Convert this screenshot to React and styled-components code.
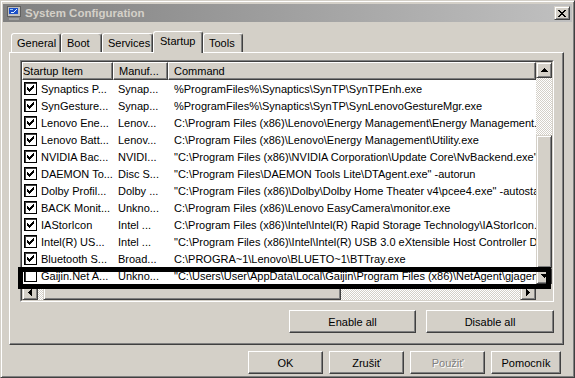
import React from 'react';
import styled, { createGlobalStyle, css } from 'styled-components';

const GlobalStyle = createGlobalStyle`
  html, body {
    margin: 0;
    padding: 0;
    background: #d4d0c8;
  }
  body {
    font-family: "Liberation Sans", Arial, sans-serif;
    font-size: 11px;
    color: #000;
  }
`;

const raised = css`
  border: 1px solid;
  border-color: #fff #404040 #404040 #fff;
  box-shadow: inset -1px -1px 0 #808080;
`;

const scrollRaised = css`
  border: 1px solid;
  border-color: #d4d0c8 #404040 #404040 #d4d0c8;
  box-shadow: inset 1px 1px 0 #fff, inset -1px -1px 0 #808080;
`;

const Window = styled.div`
  width: 575px;
  height: 378px;
  box-sizing: border-box;
  background: #d4d0c8;
  border: 1px solid;
  border-color: #d4d0c8 #404040 #404040 #d4d0c8;
  box-shadow: inset 1px 1px 0 #fff, inset -1px -1px 0 #808080;
  padding: 3px 2px 2px 2px;
  display: flex;
  flex-direction: column;
`;

const TitleBar = styled.div`
  height: 18px;
  flex: none;
  display: flex;
  align-items: center;
  padding: 0 2px 0 3px;
  background: linear-gradient(to right, #808080, #c0c0c0);
`;

const TitleText = styled.span`
  flex: 1;
  margin-left: 3px;
  font-weight: bold;
  font-size: 11.5px;
  color: #d4d0c8;
  white-space: nowrap;
`;

const CloseButton = styled.div`
  width: 16px;
  height: 14px;
  box-sizing: border-box;
  background: #d4d0c8;
  ${scrollRaised};
  display: flex;
  align-items: center;
  justify-content: center;
`;

const TabStrip = styled.div`
  display: flex;
  align-items: flex-end;
  margin: 9px 0 0 8px;
  padding-left: 0;
  height: 21px;
  flex: none;
`;

const Tab = styled.div`
  position: relative;
  z-index: ${p => (p.$active ? 2 : 0)};
  box-sizing: border-box;
  width: ${p => p.$w}px;
  height: ${p => (p.$active ? 22 : 19)}px;
  margin-bottom: ${p => (p.$active ? -1 : 0)}px;
  padding: ${p => (p.$active ? '0 0 3px 6px' : '0 0 0 5px')};
  display: flex;
  align-items: center;
  background: #d4d0c8;
  border: 1px solid;
  border-bottom: none;
  border-color: #fff #404040 transparent #fff;
  border-radius: 3px 3px 0 0;
  box-shadow: inset -1px 0 0 #808080;
`;

const Panel = styled.div`
  position: relative;
  z-index: 1;
  box-sizing: border-box;
  height: 293px;
  margin: 0 8px 0 6px;
  padding: 7px 9px 11px 10px;
  flex: none;
  ${raised};
  display: flex;
  flex-direction: column;
`;

const ListFrame = styled.div`
  position: relative;
  box-sizing: border-box;
  height: 242px;
  border: 1px solid;
  border-color: #808080 #fff #fff #808080;
`;

const ListBody = styled.div`
  height: 100%;
  box-sizing: border-box;
  border: 1px solid;
  border-color: #404040 #d4d0c8 #d4d0c8 #404040;
  display: grid;
  grid-template-columns: 1fr 16px;
  grid-template-rows: 1fr 16px;
  background: #fff;
`;

const Viewport = styled.div`
  overflow: hidden;
  background: #fff;
  min-width: 0;
`;

const HeaderRow = styled.div`
  display: flex;
  height: 18px;
`;

const HeaderCell = styled.div`
  box-sizing: border-box;
  flex: ${p => (p.$w ? `0 0 ${p.$w}px` : '1 0 auto')};
  height: 18px;
  padding-left: ${p => p.$pad}px;
  display: flex;
  align-items: center;
  background: #d4d0c8;
  ${raised};
  white-space: nowrap;
  overflow: hidden;
`;

const Row = styled.div`
  display: flex;
  align-items: center;
  height: 17px;
  white-space: nowrap;
`;

const Cell = styled.div`
  flex: ${p => (p.$w ? `0 0 ${p.$w}px` : '1 0 auto')};
  box-sizing: border-box;
  padding-left: ${p => p.$pad}px;
  display: flex;
  align-items: center;
  overflow: hidden;
`;

const CheckBox = styled.div`
  width: 13px;
  height: 13px;
  box-sizing: border-box;
  margin: 0 4px 0 2px;
  flex: none;
  background: #fff;
  border: 1px solid;
  border-color: #000 #000 #000 #000;
  box-shadow: inset 1px 1px 0 #404040;
  display: flex;
  align-items: center;
  justify-content: center;
`;

const VScroll = styled.div`
  display: flex;
  flex-direction: column;
`;

const HScroll = styled.div`
  display: flex;
`;

const Corner = styled.div`
  background: #d4d0c8;
`;

const ScrollBtn = styled.div`
  flex: none;
  width: 16px;
  height: 16px;
  box-sizing: border-box;
  background: #d4d0c8;
  ${scrollRaised};
  display: flex;
  align-items: center;
  justify-content: center;
`;

const Track = styled.div`
  flex: ${p => (p.$size ? `0 0 ${p.$size}px` : '1')};
  background: repeating-conic-gradient(#fff 0 25%, #d4d0c8 0 50%) 0 0 / 2px 2px;
`;

const Thumb = styled.div`
  flex: 0 0 ${p => p.$size}px;
  box-sizing: border-box;
  background: #d4d0c8;
  ${scrollRaised};
`;

const Highlight = styled.div`
  position: absolute;
  left: -3px;
  top: 206px;
  width: 533px;
  height: 22px;
  box-sizing: border-box;
  border: 5px solid #000;
  pointer-events: none;
`;

const ButtonRow = styled.div`
  display: flex;
  justify-content: flex-end;
  gap: ${p => p.$gap}px;
  margin: ${p => p.$margin};
  flex: none;
`;

const Button = styled.div`
  box-sizing: border-box;
  width: ${p => p.$w}px;
  height: 23px;
  background: #d4d0c8;
  ${raised};
  display: flex;
  align-items: center;
  justify-content: center;
  color: ${p => (p.$disabled ? '#808080' : '#000')};
  text-shadow: ${p => (p.$disabled ? '1px 1px 0 #fff' : 'none')};
`;

const CHECK = [
  '......#',
  '.....##',
  '#...###',
  '##.###.',
  '#####..',
  '.###...',
  '..#....',
];

const CheckMark = () => (
  <svg width="7" height="7" shapeRendering="crispEdges">
    {CHECK.flatMap((line, y) =>
      line.split('').map((c, x) => (c === '#' ? <rect key={`${x}-${y}`} x={x} y={y} width="1" height="1" fill="#000" /> : null))
    )}
  </svg>
);

const Arrow = ({ dir }) => {
  const rects = [];
  for (let i = 0; i < 4; i++) {
    const len = 1 + i * 2;
    const off = 3 - i;
    if (dir === 'up') rects.push(<rect key={i} x={off} y={i} width={len} height="1" />);
    if (dir === 'down') rects.push(<rect key={i} x={off} y={3 - i} width={len} height="1" />);
    if (dir === 'left') rects.push(<rect key={i} x={i} y={off} width="1" height={len} />);
    if (dir === 'right') rects.push(<rect key={i} x={3 - i} y={off} width="1" height={len} />);
  }
  const horiz = dir === 'left' || dir === 'right';
  return (
    <svg width={horiz ? 4 : 7} height={horiz ? 7 : 4} shapeRendering="crispEdges" fill="#000">
      {rects}
    </svg>
  );
};

const CloseGlyph = () => {
  const rects = [];
  for (let i = 0; i < 7; i++) {
    rects.push(<rect key={`a${i}`} x={i} y={i} width="2" height="1" />);
    rects.push(<rect key={`b${i}`} x={6 - i} y={i} width="2" height="1" />);
  }
  return (
    <svg width="8" height="7" shapeRendering="crispEdges" fill="#000">
      {rects}
    </svg>
  );
};

const MsconfigIcon = () => (
  <svg width="16" height="16" viewBox="0 0 16 16" shapeRendering="crispEdges">
    <rect x="1" y="1" width="13" height="10" fill="#c0c0c0" stroke="#606060" strokeWidth="1" />
    <rect x="3" y="3" width="9" height="6" fill="#1c50c8" />
    <rect x="4" y="4" width="3" height="1" fill="#9cc8ff" />
    <path d="M5 7 L7 8 L11 4" stroke="#e0f0ff" strokeWidth="1" fill="none" />
    <rect x="6" y="12" width="4" height="1" fill="#808080" />
    <rect x="3" y="13" width="10" height="2" fill="#a0a0a0" />
  </svg>
);

const rows = [
  [true, 'Synaptics P...', 'Synap...', String.raw`%ProgramFiles%\Synaptics\SynTP\SynTPEnh.exe`],
  [true, 'SynGesture...', 'Synap...', String.raw`%ProgramFiles%\Synaptics\SynTP\SynLenovoGestureMgr.exe`],
  [true, 'Lenovo Ene...', 'Lenov...', String.raw`C:\Program Files (x86)\Lenovo\Energy Management\Energy Management.exe`],
  [true, 'Lenovo Batt...', 'Lenov...', String.raw`C:\Program Files (x86)\Lenovo\Energy Management\Utility.exe`],
  [true, 'NVIDIA Bac...', 'NVIDI...', String.raw`"C:\Program Files (x86)\NVIDIA Corporation\Update Core\NvBackend.exe"`],
  [true, 'DAEMON To...', 'Disc S...', String.raw`"C:\Program Files\DAEMON Tools Lite\DTAgent.exe" -autorun`],
  [true, 'Dolby Profil...', 'Dolby ...', String.raw`"C:\Program Files (x86)\Dolby\Dolby Home Theater v4\pcee4.exe" -autostart`],
  [true, 'BACK Monit...', 'Unkno...', String.raw`C:\Program Files (x86)\Lenovo EasyCamera\monitor.exe`],
  [true, 'IAStorIcon', 'Intel ...', String.raw`C:\Program Files (x86)\Intel\Intel(R) Rapid Storage Technology\IAStorIcon.exe`],
  [true, 'Intel(R) US...', 'Intel ...', String.raw`"C:\Program Files (x86)\Intel\Intel(R) USB 3.0 eXtensible Host Controller Driver\Application\iusb3mon.exe"`],
  [true, 'Bluetooth S...', 'Broad...', String.raw`C:\PROGRA~1\Lenovo\BLUETO~1\BTTray.exe`],
  [false, 'Gaijin.Net A...', 'Unkno...', String.raw`"C:\Users\User\AppData\Local\Gaijin\Program Files (x86)\NetAgent\gjagent.exe"`],
];

const tabs = [
  ['General', 50],
  ['Boot', 41],
  ['Services', 51],
  ['Startup', 50],
  ['Tools', 40],
];

const App = () => {
  return (
    <>
      <GlobalStyle />
      <Window>
        <TitleBar>
          <MsconfigIcon />
          <TitleText>System Configuration</TitleText>
          <CloseButton><CloseGlyph /></CloseButton>
        </TitleBar>

        <TabStrip>
          {tabs.map(([name, w]) => (
            <Tab key={name} $w={w} $active={name === 'Startup'}>{name}</Tab>
          ))}
        </TabStrip>

        <Panel>
          <ListFrame>
            <ListBody>
              <Viewport>
                <HeaderRow>
                  <HeaderCell $w={91} $pad={0}>Startup Item</HeaderCell>
                  <HeaderCell $w={55} $pad={5}>Manuf...</HeaderCell>
                  <HeaderCell $pad={5}>Command</HeaderCell>
                </HeaderRow>
                {rows.map(([on, item, manuf, cmd]) => (
                  <Row key={item}>
                    <Cell $w={91} $pad={0}>
                      <CheckBox>{on && <CheckMark />}</CheckBox>
                      {item}
                    </Cell>
                    <Cell $w={55} $pad={5}>{manuf}</Cell>
                    <Cell $pad={6}>{cmd}</Cell>
                  </Row>
                ))}
              </Viewport>
              <VScroll>
                <ScrollBtn><Arrow dir="up" /></ScrollBtn>
                <Track $size={57} />
                <Thumb $size={133} />
                <Track />
                <ScrollBtn><Arrow dir="down" /></ScrollBtn>
              </VScroll>
              <HScroll>
                <ScrollBtn><Arrow dir="left" /></ScrollBtn>
                <Track $size={5} />
                <Thumb $size={298} />
                <Track />
                <ScrollBtn><Arrow dir="right" /></ScrollBtn>
              </HScroll>
              <Corner />
            </ListBody>
            <Highlight />
          </ListFrame>

          <ButtonRow $gap={10} $margin="8px 0 0 0">
            <Button $w={127}>Enable all</Button>
            <Button $w={128}>Disable all</Button>
          </ButtonRow>
        </Panel>

        <ButtonRow $gap={6} $margin="6px 11px 0 0">
          <Button $w={75}>OK</Button>
          <Button $w={75}>Zrušiť</Button>
          <Button $w={75} $disabled>Použiť</Button>
          <Button $w={70}>Pomocník</Button>
        </ButtonRow>
      </Window>
    </>
  );
};

export default App;
